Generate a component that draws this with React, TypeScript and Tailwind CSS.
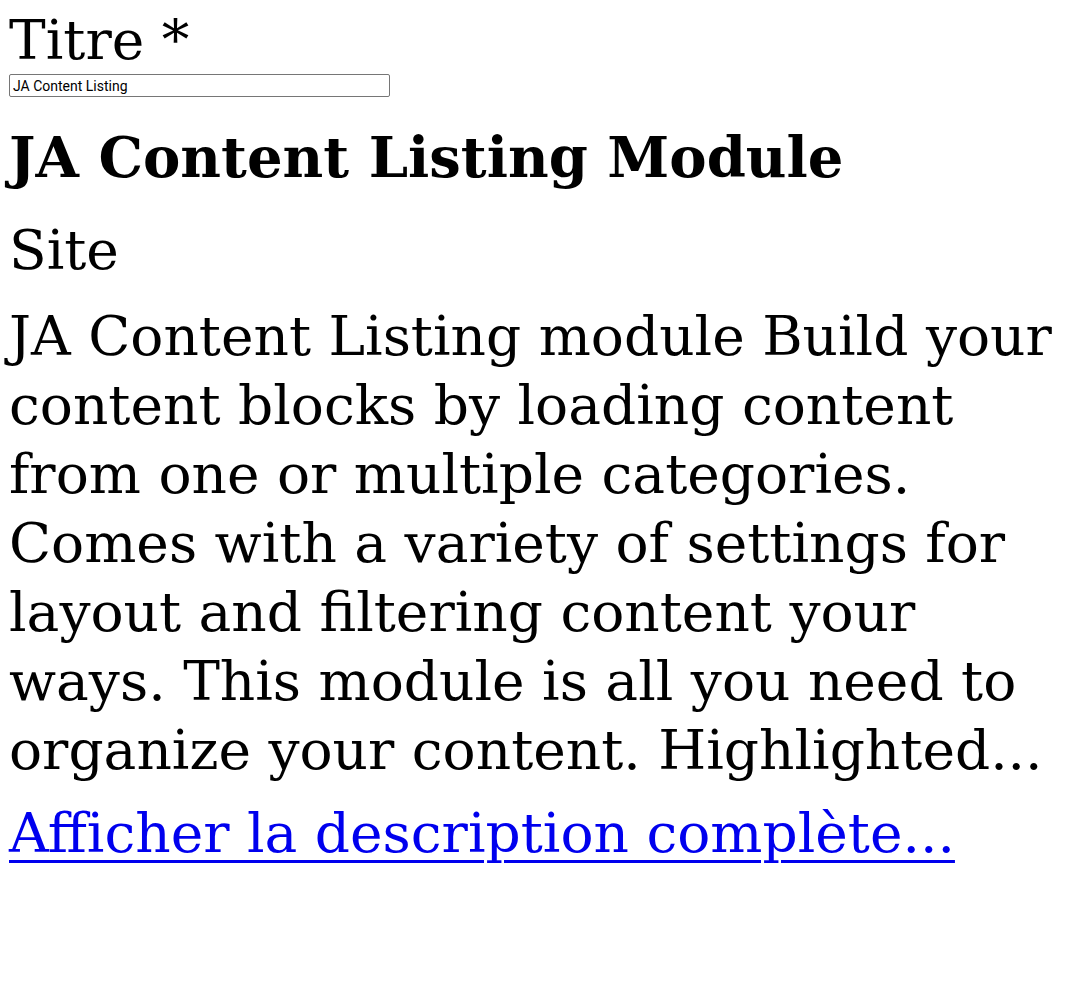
export default function App() {
  const serif = "font-['DejaVu_Serif','Liberation_Serif',serif]";

  return (
    <div className={`min-h-screen bg-white px-[9px] pt-[10px] text-black ${serif}`}>
      <label className="block text-[55px] leading-[60px]">Titre *</label>
      <input
        type="text"
        defaultValue="JA Content Listing"
        className="mt-[4px] block h-[23px] w-[381px] rounded-[2px] border border-[#767676] px-[3px] font-['Roboto',sans-serif] text-[14px] text-black outline-none"
      />

      <h1 className="mt-[26px] text-[56px] font-bold leading-[69px]">JA Content Listing Module</h1>

      <div className="mt-[24px] text-[55px] leading-[69px]">Site</div>

      <p className="mt-[17px] text-[55px] leading-[69px]">
        JA Content Listing module Build your
        <br />
        content blocks by loading content
        <br />
        from one or multiple categories.
        <br />
        Comes with a variety of settings for
        <br />
        layout and filtering content your
        <br />
        ways. This module is all you need to
        <br />
        organize your content. Highlighted...
      </p>

      <a
        href="#"
        className="mt-[14px] inline-block text-[55px] leading-[69px] text-[#0000ee] underline decoration-[3px] underline-offset-[8px]"
      >
        Afficher la description complète...
      </a>
    </div>
  );
}
